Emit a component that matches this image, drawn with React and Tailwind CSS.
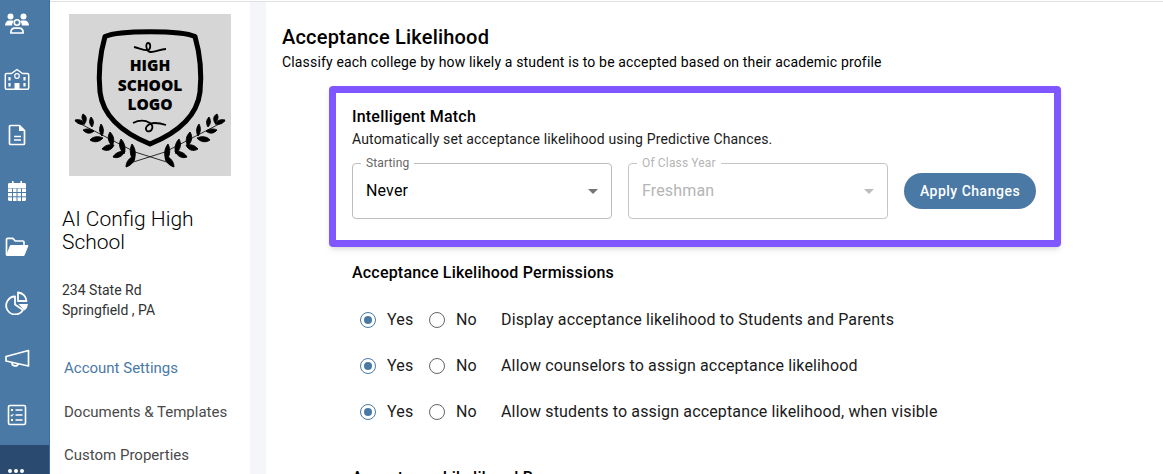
const blue = '#4a79a6'

function UsersIcon() {
  return (
    <svg viewBox="0 0 26 24" className="h-6 w-[26px]" fill="white">
      <circle cx="6.500" cy="5.500" r="3" />
      <circle cx="19.500" cy="5.500" r="3" />
      <path d="M1 14.500c0-3 2-5 4-5h3.500c.8 0 1.200.4 1 1-1 1.200-1.400 2.500-1.300 4H1zM25 14.500c0-3-2-5-4-5h-3.500c-.8 0-1.200.4-1 1 1 1.200 1.400 2.500 1.300 4H25z" />
      <circle cx="13" cy="11.500" r="2.700" fill="none" stroke="white" strokeWidth="1.600" />
      <path d="M6.800 22c0-3 1.800-4.800 4-4.800h4.400c2.200 0 4 1.800 4 4.800z" fill="none" stroke="white" strokeWidth="1.700" strokeLinejoin="round" />
    </svg>
  )
}

function SchoolIcon() {
  return (
    <svg viewBox="0 0 26 24" className="h-6 w-[26px]" fill="none" stroke="white" strokeWidth="1.500">
      <path d="M7.500 6.500 13 2.500l5.500 4h5c.8 0 1.200.5 1.200 1.200V21c0 .7-.4 1.200-1.200 1.200h-21c-.8 0-1.200-.5-1.200-1.200V7.700c0-.7.4-1.200 1.200-1.200z" strokeLinejoin="round" />
      <circle cx="13" cy="9" r="2.300" strokeWidth="1.200" />
      <path d="M10.500 22v-6h5v6z" fill="white" stroke="none" />
      <path d="M5.500 10v3.500M5.500 16v3.500M20.500 10v3.500M20.500 16v3.500" strokeWidth="2.200" />
    </svg>
  )
}

function DocIcon() {
  return (
    <svg viewBox="0 0 24 24" className="h-6 w-6" fill="none" stroke="white" strokeWidth="1.700">
      <path d="M5.500 2.500h9l5 5V20.500c0 .6-.4 1-1 1h-13c-.6 0-1-.4-1-1v-17c0-.6.4-1 1-1z" strokeLinejoin="round" />
      <path d="M14 2.500v5.500h5.500z" fill="white" stroke="none" />
      <path d="M9 13.500h7M9 17h7" strokeWidth="1.600" />
    </svg>
  )
}

function CalendarIcon() {
  return (
    <svg viewBox="0 0 24 24" className="h-6 w-6" fill="white">
      <path d="M7 2h1.600v2H15.400V2H17v2h2.500c1 0 1.500.6 1.500 1.500V9H3V5.500C3 4.600 3.500 4 4.500 4H7z" />
      <path d="M3 9.500h18v11c0 .9-.6 1.500-1.500 1.500h-15c-.9 0-1.500-.6-1.500-1.500z" />
      <path d="M3 13.500h18M3 17.800h18M7.500 9.500V22M12 9.500V22M16.500 9.500V22" stroke={blue} strokeWidth="1" fill="none" />
    </svg>
  )
}

function FolderIcon() {
  return (
    <svg viewBox="0 0 26 24" className="h-6 w-[26px]" fill="none" stroke="white" strokeWidth="1.700">
      <path d="M2.500 20V4.500c0-.7.4-1.200 1.200-1.200h5.100l2.500 2.700h7.500c.8 0 1.200.4 1.200 1.200V10" strokeLinejoin="round" />
      <path d="M6.500 10.500h17.500L20 20.500H2.500z" fill="white" stroke="white" strokeWidth="1" strokeLinejoin="round" />
    </svg>
  )
}

function PieIcon() {
  return (
    <svg viewBox="0 0 24 24" className="h-6 w-6" fill="none" stroke="white" strokeWidth="1.800">
      <path d="M10 5.500A9 9 0 1 0 18 19l-8-5.500z" strokeLinejoin="round" />
      <path d="M13 1.500a9 9 0 0 1 8.500 8.500H13z" strokeLinejoin="round" />
      <path d="M13.500 13h9.500a9 9 0 0 1-3.500 6.500z" fill="white" stroke="none" />
    </svg>
  )
}

function MegaphoneIcon() {
  return (
    <svg viewBox="0 0 26 24" className="h-6 w-[26px]" fill="none" stroke="white" strokeWidth="1.700">
      <path d="M2 9.500 24.500 3.500v15.500L2 14z" strokeLinejoin="round" />
      <path d="M8 15.500a3.200 3.200 0 0 0 6.300 1" />
    </svg>
  )
}

function ChecklistIcon() {
  return (
    <svg viewBox="0 0 24 24" className="h-6 w-6" fill="none" stroke="white" strokeWidth="1.600">
      <rect x="3.500" y="2.500" width="17" height="19" rx="1.500" />
      <path d="M10.500 7h7M10.500 12h7M10.500 17h7" />
      <path d="M6 7h2M6 17h2" strokeWidth="1.800" />
      <path d="m5.800 12 1 1 1.600-2" strokeWidth="1.100" />
    </svg>
  )
}

function SchoolLogo() {
  return (
    <svg viewBox="0 0 162 162" className="h-[162px] w-[162px] bg-[#d6d6d6]">
      <path d="M36 22.500C50 16 112 16 126 22.500C131 40 133 58 131 78C128 103 108 119 81 130C54 119 34 103 31 78C29 58 31 40 36 22.500Z" fill="none" stroke="black" strokeWidth="5" strokeLinejoin="round" />
      <path d="M65 33c6 1 10 4 14 3 3-1 3-7 0-7s-2 9 3 9c5 0 9-3 15-3" fill="none" stroke="black" strokeWidth="1.800" />
      <text x="81" y="57" textAnchor="middle" fontFamily="'Open Sans', sans-serif" fontWeight="800" fontSize="15.500" fill="black">HIGH</text>
      <text x="81" y="76.500" textAnchor="middle" fontFamily="'Open Sans', sans-serif" fontWeight="800" fontSize="15.500" fill="black">SCHOOL</text>
      <text x="81" y="96" textAnchor="middle" fontFamily="'Open Sans', sans-serif" fontWeight="800" fontSize="15.500" fill="black">LOGO</text>
      <path d="M64 109c6-3 12-3 17 0 5 4 1 10-3 8-3-3 1-8 8-8 5 0 8 1 11 2" fill="none" stroke="black" strokeWidth="1.800" />
      <path d="M6 107 66 138 M156 107 96 138 M66 138 104 150 M96 138 58 150" fill="none" stroke="black" strokeWidth="0.800" />
      <g fill="black" stroke="black" strokeWidth="0.900" strokeLinejoin="round">
        <path d="M14 100c4 2 4 6 2 9-3-3-4-6-2-9zM6 106c4-1 8 0 10 4-4 1-8 0-10-4zM22 103c3 3 3 7 1 10-3-3-3-7-1-10zM14 116c4-2 8-1 11 1-3 3-8 3-11-1zM32 110c3 4 3 8 1 12-3-4-3-8-1-12zM21 126c3-4 9-4 13-2-3 4-9 5-13 2zM41 118c4 4 5 9 2 14-4-5-5-9-2-14zM33 135c3-4 8-5 12-4-2 5-7 7-12 4zM52 125c4 4 5 10 3 15-4-4-6-10-3-15zM44 143c2-4 7-6 12-6-2 5-7 8-12 6zM63 130c4 5 4 11 2 17-4-5-5-11-2-17zM57 153c0-5 3-9 8-11 1 5-2 9-8 11z" />
        <path d="M148 100c-4 2-4 6-2 9 3-3 4-6 2-9zM156 106c-4-1-8 0-10 4 4 1 8 0 10-4zM140 103c-3 3-3 7-1 10 3-3 3-7 1-10zM148 116c-4-2-8-1-11 1 3 3 8 3 11-1zM130 110c-3 4-3 8-1 12 3-4 3-8 1-12zM141 126c-3-4-9-4-13-2 3 4 9 5 13 2zM121 118c-4 4-5 9-2 14 4-5 5-9 2-14zM129 135c-3-4-8-5-12-4 2 5 7 7 12 4zM110 125c-4 4-5 10-3 15 4-4 6-10 3-15zM118 143c-2-4-7-6-12-6 2 5 7 8 12 6zM99 130c-4 5-4 11-2 17 4-5 5-11 2-17zM105 153c0-5-3-9-8-11-1 5 2 9 8 11z" />
      </g>
    </svg>
  )
}

function Select({ label, value, disabled }) {
  return (
    <div className={`relative h-14 w-[260px] rounded border px-[13px] ${disabled ? 'border-[#c4c4c4]' : 'border-[#bdbdbd]'}`}>
      <span className={`absolute -top-[9px] left-[8px] bg-white px-[5px] text-xs leading-[16px] tracking-[0.15px] ${disabled ? 'text-[#b5b5b5]' : 'text-[#666666]'}`}>{label}</span>
      <div className="flex h-full items-center justify-between">
        <span className={`text-base tracking-[0.15px] ${disabled ? 'text-[#b5b5b5]' : 'text-black'}`}>{value}</span>
        <span className={`h-0 w-0 border-x-[5px] border-t-[5px] border-x-transparent ${disabled ? 'border-t-[#bdbdbd]' : 'border-t-[#757575]'}`} />
      </div>
    </div>
  )
}

function Radio({ checked }) {
  return (
    <span className={`flex h-4 w-4 items-center justify-center rounded-full border-[1.5px] ${checked ? 'border-[#4a79a6]' : 'border-[#666666]'}`}>
      {checked && <span className="h-2 w-2 rounded-full bg-[#4a79a6]" />}
    </span>
  )
}

const permissions = [
  'Display acceptance likelihood to Students and Parents',
  'Allow counselors to assign acceptance likelihood',
  'Allow students to assign acceptance likelihood, when visible',
]

function PermissionRow({ text }) {
  return (
    <div className="flex h-[46px] items-center text-base tracking-[0.15px] text-[#1a1a1a]">
      <span className="ml-2"><Radio checked /></span>
      <span className="ml-[11px] w-[34px]">Yes</span>
      <span className="ml-2"><Radio /></span>
      <span className="ml-[11px] w-[45px]">No</span>
      <span>{text}</span>
    </div>
  )
}

export default function App() {
  return (
    <div className="flex h-[474px] w-[1163px] overflow-hidden bg-white font-['Roboto',sans-serif]">
      <nav className="flex h-full w-[50px] shrink-0 flex-col border-r border-[#3e6c98] bg-[#4a79a6] pt-[11px]">
        <div className="flex w-[34px] flex-col items-center gap-8">
          <UsersIcon />
          <SchoolIcon />
          <DocIcon />
          <CalendarIcon />
          <FolderIcon />
          <PieIcon />
          <MegaphoneIcon />
          <ChecklistIcon />
        </div>
        <div className="mt-[18px] flex h-[29px] w-full items-end gap-[2px] bg-[#2b4a6f] pb-[1px] pl-[8px]">
          <span className="h-1 w-1 rounded-full bg-white" />
          <span className="h-1 w-1 rounded-full bg-white" />
          <span className="h-1 w-1 rounded-full bg-white" />
        </div>
      </nav>

      <div className="mt-px flex flex-1 border-t border-[#e0e0e0]">
        <aside className="w-[200px] shrink-0 pt-3">
          <div className="flex justify-center"><SchoolLogo /></div>
          <h2 className="ml-3 mt-8 text-[21px] font-light leading-[23px] text-black">AI Config High School</h2>
          <p className="ml-3 mt-[26px] text-sm leading-5 text-[#333333]">234 State Rd<br />Springfield , PA</p>
          <ul className="ml-[14px] mt-[37px] text-[15px] text-[#4a4a4a]">
            <li className="h-[44px] leading-[22px] text-[#4a79a6]">Account Settings</li>
            <li className="h-[43px] leading-[22px]">Documents &amp; Templates</li>
            <li className="leading-[22px]">Custom Properties</li>
          </ul>
        </aside>
        <div className="w-4 shrink-0 bg-[#f5f6f9]" />

        <main className="flex-1 pl-4 pt-[22px]">
          <h1 className="text-xl font-medium leading-[26px] tracking-[0.2px] text-black">Acceptance Likelihood</h1>
          <p className="mt-[2px] text-sm leading-5 tracking-[0.16px] text-black">Classify each college by how likely a student is to be accepted based on their academic profile</p>

          <section className="ml-[47px] mt-[14px] h-[161px] w-[732px] rounded border-[7px] border-[#7f56ff] pl-4 pt-[14px] shadow-md">
            <h3 className="text-base font-medium leading-5 tracking-[0.2px] text-black">Intelligent Match</h3>
            <p className="mt-[2px] text-sm leading-5 tracking-[0.15px] text-[#1a1a1a]">Automatically set acceptance likelihood using Predictive Chances.</p>
            <div className="mt-[14px] flex items-center gap-4">
              <Select label="Starting" value="Never" />
              <Select label="Of Class Year" value="Freshman" disabled />
              <button className="h-9 w-[132px] rounded-full bg-[#4a79a6] text-sm font-medium tracking-[0.5px] text-white">Apply Changes</button>
            </div>
          </section>

          <div className="ml-[70px] mt-4">
            <h3 className="text-base font-medium leading-5 tracking-[0.2px] text-black">Acceptance Likelihood Permissions</h3>
            <div className="mt-[14px]">
              {permissions.map((text) => <PermissionRow key={text} text={text} />)}
            </div>
            <h3 className="mt-[33px] text-base font-medium leading-5 tracking-[0.2px] text-black">Acceptance Likelihood Ranges</h3>
          </div>
        </main>
      </div>
    </div>
  )
}
